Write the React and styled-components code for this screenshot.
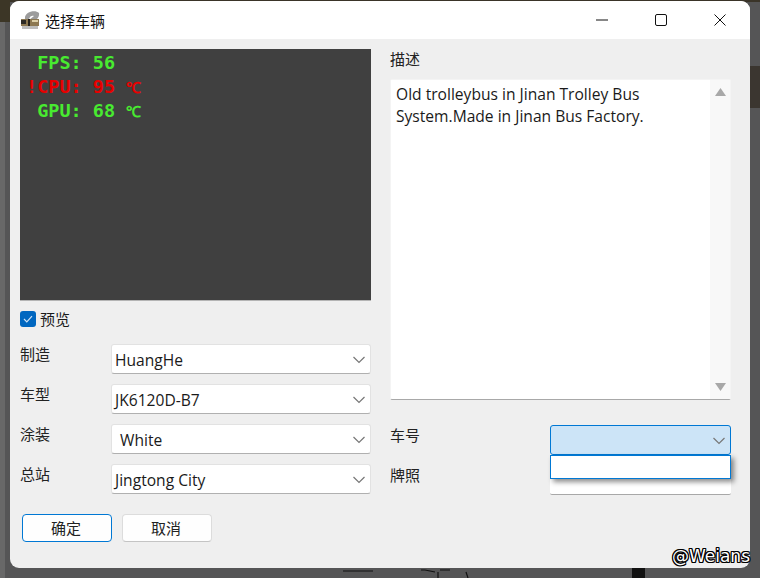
import styled, { createGlobalStyle } from 'styled-components';

const GlobalStyle = createGlobalStyle`
  html, body {
    margin: 0;
    padding: 0;
    width: 760px;
    height: 578px;
    overflow: hidden;
    background: #4a4a4a;
  }
  * {
    box-sizing: border-box;
  }
`;

const Desktop = styled.div`
  position: relative;
  width: 760px;
  height: 578px;
  padding: 1px 10px 10px;
  background: #555556;
  font-family: "Noto Sans CJK SC", "Noto Sans", sans-serif;
  color: #1a1a1a;
`;

const Wallpaper = styled.svg`
  position: absolute;
  left: 0;
  top: 0;
`;

const Window = styled.div`
  position: relative;
  width: 740px;
  height: 567px;
  border-radius: 9px;
  overflow: hidden;
  background: #efefef;
  display: flex;
  flex-direction: column;
`;

const TitleBar = styled.div`
  height: 38px;
  flex: none;
  background: #fff;
  display: flex;
  align-items: center;
  padding-left: 10px;
`;

const TitleText = styled.span`
  margin-left: 5px;
  font-size: 15px;
  color: #111;
`;

const WindowButtons = styled.div`
  margin-left: auto;
  display: flex;
  padding-right: 1px;
`;

const WindowButton = styled.div`
  width: 59px;
  height: 38px;
  display: flex;
  align-items: center;
  justify-content: center;
`;

const Body = styled.div`
  flex: 1;
  display: grid;
  grid-template-columns: 351px 341px;
  column-gap: 19px;
  padding: 10px 0 0 10px;
`;

const LeftColumn = styled.div`
  display: flex;
  flex-direction: column;
`;

const RightColumn = styled.div`
  display: flex;
  flex-direction: column;
`;

const Preview = styled.div`
  height: 252px;
  background: #404040;
  border-bottom: 1px solid #b4b4b4;
  padding: 2px 0 0 6px;
  font-family: "DejaVu Sans Mono", "Liberation Mono", monospace;
  font-size: 18.5px;
  font-weight: 700;
  line-height: 24px;
`;

const StatLine = styled.div`
  color: ${(props) => (props.$alert ? '#e80000' : '#48ea30')};
  white-space: pre;
  height: 24px;
`;

const Degree = styled.span`
  font-size: 15px;
`;

const CheckRow = styled.label`
  display: flex;
  align-items: center;
  gap: 4px;
  height: 18px;
  margin-top: 8px;
  font-size: 15px;
`;

const CheckBox = styled.span`
  width: 16px;
  height: 16px;
  margin-top: 1px;
  border-radius: 3px;
  background: #0067c0;
  display: flex;
  align-items: center;
  justify-content: center;
`;

const FormRows = styled.div`
  display: flex;
  flex-direction: column;
  gap: 10px;
  margin-top: 17px;
`;

const FormRow = styled.div`
  display: grid;
  grid-template-columns: 91px 260px;
  height: 30px;
`;

const FieldLabel = styled.span`
  font-size: 15px;
  line-height: 20px;
  color: #222;
`;

const Select = styled.div`
  height: 30px;
  border-radius: 3px;
  background: ${(props) => (props.$open ? '#cce4f7' : '#fff')};
  border: 1px solid ${(props) => (props.$open ? '#0078d4' : '#e2e2e2')};
  border-bottom-color: ${(props) => (props.$open ? '#0078d4' : '#b0b0b0')};
  display: flex;
  align-items: center;
  padding: 1px 4px 0 ${(props) => props.$indent || 4}px;
  font-family: "Open Sans", "Noto Sans", sans-serif;
  font-size: 15.6px;
  color: #1a1a1a;
`;

const Chevron = styled.svg`
  margin-left: auto;
  flex: none;
`;

const Buttons = styled.div`
  display: flex;
  gap: 10px;
  margin-top: 20px;
  padding-left: 2px;
`;

const Button = styled.div`
  width: 90px;
  height: 28px;
  padding: 0 2px 1px 0;
  border-radius: 4px;
  background: #fefefe;
  border: 1px solid ${(props) => (props.$primary ? '#0078d4' : '#dcdcdc')};
  border-bottom-color: ${(props) => (props.$primary ? '#0078d4' : '#c4c4c4')};
  display: flex;
  align-items: center;
  justify-content: center;
  font-size: 15px;
  color: #222;
`;

const DescLabel = styled.div`
  font-size: 15px;
  line-height: 20px;
  color: #222;
`;

const DescBox = styled.div`
  height: 321px;
  margin-top: 10px;
  background: #fff;
  border: 1px solid #f4f4f4;
  border-bottom: 1px solid #a8a8a8;
  display: flex;
  border-radius: 2px;
`;

const DescText = styled.div`
  flex: 1;
  padding: 3px 5px;
  font-family: "Open Sans", "Noto Sans", sans-serif;
  font-size: 15.6px;
  line-height: 22px;
  color: #1a1a1a;
`;

const ScrollTrack = styled.div`
  width: 20px;
  background: #f8f8f8;
  display: flex;
  flex-direction: column;
  justify-content: space-between;
  align-items: center;
  padding: 8px 0;
`;

const SideRows = styled.div`
  display: flex;
  flex-direction: column;
  gap: 10px;
  margin-top: 25px;
`;

const SideRow = styled.div`
  position: relative;
  display: grid;
  grid-template-columns: 160px 181px;
  height: 30px;
`;

const PlateInput = styled.div`
  height: 30px;
  background: #fff;
  border-bottom: 1px solid #a8a8a8;
  border-radius: 2px;
`;

const DropList = styled.div`
  position: absolute;
  left: 160px;
  top: 30px;
  width: 181px;
  height: 24px;
  background: #fff;
  border: 1px solid #0078d4;
  box-shadow: 3px 3px 5px rgba(0, 0, 0, 0.45);
  z-index: 2;
`;

const Watermark = styled.div`
  position: absolute;
  right: 10px;
  bottom: 11px;
  font-family: "DejaVu Sans", sans-serif;
  font-size: 17px;
  line-height: 22px;
  color: #fff;
  text-shadow: 1px 0 0 #000, -1px 0 0 #000, 0 1px 0 #000, 0 -1px 0 #000,
    1px 1px 0 #000, -1px -1px 0 #000, 1px -1px 0 #000, -1px 1px 0 #000;
`;

const AppIcon = () => (
  <svg width="20" height="20" viewBox="0 0 20 20">
    <path d="M5 9 C4 2 15 -1 19 3 C19.5 6 18 8 16 10 L9 10 L14 6 C12 5 10 6 9 9 Z" fill="#9c9c9c" />
    <rect x="1" y="9" width="18" height="7" fill="#8c7852" />
    <rect x="1" y="10" width="5" height="4" fill="#2c2a24" />
    <rect x="8" y="9" width="2" height="7" fill="#26231c" />
    <rect x="12" y="10" width="6" height="2" fill="#dccfa8" />
    <rect x="2" y="16" width="16" height="3" fill="#bdbdbd" />
  </svg>
);

const ChevronIcon = () => (
  <Chevron width="14" height="8" viewBox="0 0 14 8" fill="none">
    <path d="M1.5 1 L7 6.5 L12.5 1" stroke="#777" strokeWidth="1.2" />
  </Chevron>
);

const leftFields = [
  { label: '制造', value: 'HuangHe', indent: 3 },
  { label: '车型', value: 'JK6120D-B7', indent: 3 },
  { label: '涂装', value: 'White', indent: 8 },
  { label: '总站', value: 'Jingtong City', indent: 3 },
];

export default function App() {
  return (
    <Desktop>
      <GlobalStyle />
      <Wallpaper width="760" height="578" viewBox="0 0 760 578" fill="none">
        <rect x="0" y="0" width="760" height="2" fill="#3a3428" />
        <rect x="0" y="0" width="5" height="578" fill="#686868" />
        <path d="M0 0 H10 V22 H0 Z" fill="#3c3626" />
        <rect x="750" y="66" width="10" height="42" fill="#3b3630" />
        <path d="M343 571 H373 M421 570 H425 M425 570 L435 572 M440 570 H450 M438 572 V578 M466 572 L468 578" stroke="#111" strokeWidth="1.2" />
        <rect x="632" y="568" width="13" height="10" fill="#111" />
      </Wallpaper>
      <Window>
        <TitleBar>
          <AppIcon />
          <TitleText>选择车辆</TitleText>
          <WindowButtons>
            <WindowButton>
              <svg width="12" height="12" viewBox="0 0 12 12">
                <path d="M0 6 H12" stroke="#111" strokeWidth="1" />
              </svg>
            </WindowButton>
            <WindowButton>
              <svg width="12" height="12" viewBox="0 0 12 12" fill="none">
                <rect x="0.5" y="0.5" width="11" height="11" rx="1.5" stroke="#111" strokeWidth="1" />
              </svg>
            </WindowButton>
            <WindowButton>
              <svg width="12" height="12" viewBox="0 0 12 12">
                <path d="M0.5 0.5 L11.5 11.5 M11.5 0.5 L0.5 11.5" stroke="#111" strokeWidth="1" />
              </svg>
            </WindowButton>
          </WindowButtons>
        </TitleBar>
        <Body>
          <LeftColumn>
            <Preview>
              <StatLine> FPS: 56</StatLine>
              <StatLine $alert>!CPU: 95 <Degree>℃</Degree></StatLine>
              <StatLine> GPU: 68 <Degree>℃</Degree></StatLine>
            </Preview>
            <CheckRow>
              <CheckBox>
                <svg width="10" height="8" viewBox="0 0 10 8" fill="none">
                  <path d="M1 4 L3.8 6.8 L9 1.2" stroke="#cfe4f7" strokeWidth="1.2" />
                </svg>
              </CheckBox>
              预览
            </CheckRow>
            <FormRows>
              {leftFields.map((field) => (
                <FormRow key={field.label}>
                  <FieldLabel>{field.label}</FieldLabel>
                  <Select $indent={field.indent}>
                    {field.value}
                    <ChevronIcon />
                  </Select>
                </FormRow>
              ))}
            </FormRows>
            <Buttons>
              <Button $primary>确定</Button>
              <Button>取消</Button>
            </Buttons>
          </LeftColumn>
          <RightColumn>
            <DescLabel>描述</DescLabel>
            <DescBox>
              <DescText>
                Old trolleybus in Jinan Trolley Bus
                <br />
                System.Made in Jinan Bus Factory.
              </DescText>
              <ScrollTrack>
                <svg width="11" height="8" viewBox="0 0 11 8">
                  <path d="M5.5 0 L11 8 H0 Z" fill="#a8a8a8" />
                </svg>
                <svg width="11" height="8" viewBox="0 0 11 8">
                  <path d="M0 0 H11 L5.5 8 Z" fill="#a8a8a8" />
                </svg>
              </ScrollTrack>
            </DescBox>
            <SideRows>
              <SideRow>
                <FieldLabel>车号</FieldLabel>
                <Select $open>
                  <ChevronIcon />
                </Select>
                <DropList />
              </SideRow>
              <SideRow>
                <FieldLabel>牌照</FieldLabel>
                <PlateInput />
              </SideRow>
            </SideRows>
          </RightColumn>
        </Body>
      </Window>
      <Watermark>@Weians</Watermark>
    </Desktop>
  );
}
